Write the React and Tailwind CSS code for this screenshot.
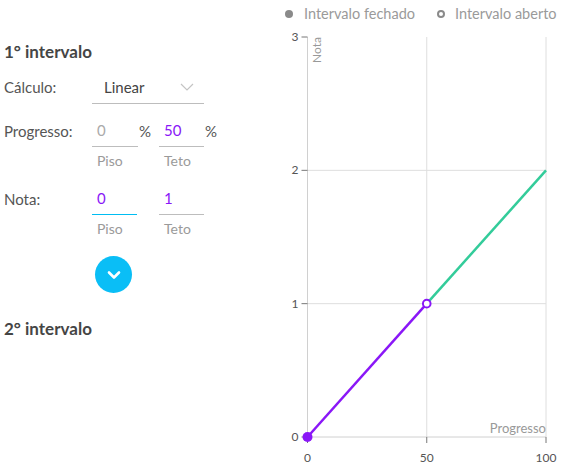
import React from "react";

const font = { fontFamily: "Lato, 'Noto Sans', sans-serif" };

function Field({ value, color = "text-[#8a17f7]", focus = false, w = "w-[46px]" }) {
  return (
    <div
      className={`${w} h-[32px] flex items-center pl-[5px] border-b ${
        focus ? "border-[#00bdf2]" : "border-[#bdbdbd]"
      } ${color} text-[15px]`}
    >
      {value}
    </div>
  );
}

function Chart() {
  const X = (v) => 37.5 + v * 2.385;
  const Y = (n) => 410 - n * 133.33;
  return (
    <svg width="291" height="437" viewBox="0 0 291 437" style={font}>
      {[50, 100].map((v) => (
        <line key={v} x1={X(v)} x2={X(v)} y1={Y(3)} y2={Y(0)} stroke="#dedede" strokeWidth="1" />
      ))}
      {[1, 2].map((n) => (
        <line key={n} x1={X(0)} x2={X(100)} y1={Y(n)} y2={Y(n)} stroke="#dedede" strokeWidth="1" />
      ))}
      <line x1={X(0)} x2={X(0)} y1={Y(3)} y2={Y(0)} stroke="#d0d0d0" strokeWidth="1" />
      <line x1={X(0)} x2={X(100)} y1={Y(0)} y2={Y(0)} stroke="#d0d0d0" strokeWidth="1" />
      {[0, 1, 2, 3].map((n) => (
        <g key={n}>
          <line x1={X(0) - 6} x2={X(0)} y1={Y(n)} y2={Y(n)} stroke="#777" strokeWidth="1" />
          <text x={X(0) - 9} y={Y(n) + 4} textAnchor="end" fontSize="12" fill="#555">
            {n}
          </text>
        </g>
      ))}
      {[0, 50, 100].map((v) => (
        <g key={v}>
          <line x1={X(v)} x2={X(v)} y1={Y(0)} y2={Y(0) + 6} stroke="#777" strokeWidth="1" />
          <text x={X(v)} y={Y(0) + 25} textAnchor="middle" fontSize="12" fill="#555">
            {v}
          </text>
        </g>
      ))}
      <text
        x={0}
        y={0}
        transform={`translate(${X(0) + 13} ${Y(3) + 26}) rotate(-90)`}
        fontSize="12"
        fill="#999"
      >
        Nota
      </text>
      <text x={X(100)} y={Y(0) - 4} textAnchor="end" fontSize="13" fill="#999">
        Progresso
      </text>
      <line x1={X(50)} y1={Y(1)} x2={X(100)} y2={Y(2)} stroke="#33cc9a" strokeWidth="2.5" />
      <line x1={X(0)} y1={Y(0)} x2={X(50)} y2={Y(1)} stroke="#8a17f7" strokeWidth="2.5" />
      <circle cx={X(0)} cy={Y(0)} r="5" fill="#8a17f7" />
      <circle cx={X(50)} cy={Y(1)} r="3.8" fill="#fff" stroke="#8a17f7" strokeWidth="2" />
    </svg>
  );
}

export default function App() {
  return (
    <div className="w-[561px] h-[464px] flex bg-white overflow-hidden" style={font}>
      <div className="w-[270px] shrink-0 pl-[4px] pt-[40px] flex flex-col">
        <div className="h-[24px] flex items-center text-[17px] font-bold text-[#454545]">1° intervalo</div>

        <div className="mt-[7px] h-[33px] flex items-center text-[15px] text-[#555]">
          <div className="w-[88px]">Cálculo:</div>
          <div className="w-[112px] h-[33px] border-b border-[#bdbdbd] flex items-center justify-between pl-[12px] pr-[10px] text-[#444]">
            <span>Linear</span>
            <svg width="14" height="8" viewBox="0 0 14 8">
              <path d="M1 1 L7 7 L13 1" fill="none" stroke="#c4c4c4" strokeWidth="1.2" />
            </svg>
          </div>
        </div>

        <div className="mt-[11px] h-[32px] flex items-center text-[15px] text-[#555]">
          <div className="w-[88px]">Progresso:</div>
          <Field value="0" color="text-[#aaa]" />
          <div className="w-[21px] pl-[1px]">%</div>
          <Field value="50" w="w-[45px]" />
          <div className="pl-[1px]">%</div>
        </div>
        <div className="h-[26px] flex items-center text-[14px] text-[#9a9a9a]">
          <div className="w-[88px]" />
          <div className="w-[67px] pl-[5px]">Piso</div>
          <div className="pl-[5px]">Teto</div>
        </div>

        <div className="mt-[10px] h-[32px] flex items-center text-[15px] text-[#555]">
          <div className="w-[88px]">Nota:</div>
          <Field value="0" focus w="w-[45px]" />
          <div className="w-[22px]" />
          <Field value="1" w="w-[45px]" />
        </div>
        <div className="h-[26px] flex items-center text-[14px] text-[#9a9a9a]">
          <div className="w-[88px]" />
          <div className="w-[67px] pl-[5px]">Piso</div>
          <div className="pl-[5px]">Teto</div>
        </div>

        <div className="mt-[15px] pl-[88px]">
          <div className="ml-[3px] w-[37px] h-[37px] rounded-full bg-[#0abef6] flex items-center justify-center">
            <svg width="14" height="10" viewBox="0 0 14 10">
              <path d="M2 2.5 L7 7.5 L12 2.5" fill="none" stroke="#fff" strokeWidth="2.6" strokeLinecap="round" strokeLinejoin="round" />
            </svg>
          </div>
        </div>

        <div className="mt-[24px] h-[24px] flex items-center text-[17px] font-bold text-[#454545]">2° intervalo</div>
      </div>

      <div className="w-[291px] shrink-0 flex flex-col">
        <div className="h-[27px] flex items-center pl-[15px] text-[14.5px] text-[#9a9a9a] whitespace-nowrap">
          <span className="shrink-0 w-[8px] h-[8px] rounded-full bg-[#8a8a8a]" />
          <span className="shrink-0 ml-[11px]">Intervalo fechado</span>
          <span className="shrink-0 ml-[22px] w-[8px] h-[8px] rounded-full border-2 border-[#8a8a8a]" />
          <span className="shrink-0 ml-[10px]">Intervalo aberto</span>
        </div>
        <Chart />
      </div>
    </div>
  );
}
